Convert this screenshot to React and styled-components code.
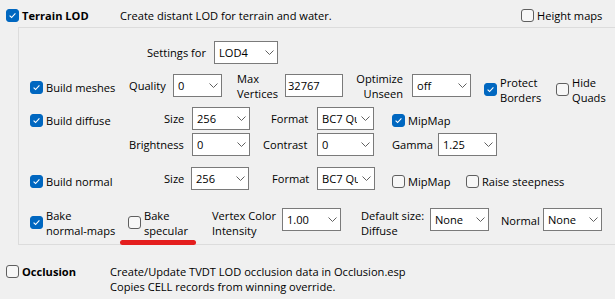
import React from 'react';
import styled, { createGlobalStyle } from 'styled-components';

const Global = createGlobalStyle`
  html, body { margin: 0; padding: 0; background: #f0f0f0; }
  body {
    width: 615px; height: 299px; overflow: hidden;
    font-family: "Open Sans", "Noto Sans", sans-serif;
    font-size: 11.1px; color: #000;
  }
`;

const Page = styled.div`
  width: 615px;
  height: 299px;
  display: flex;
  flex-direction: column;
`;

const Header = styled.div`
  display: flex;
  align-items: center;
  height: 24px;
  padding: 3px 0 0 6px;
`;

const Panel = styled.div`
  position: relative;
  margin-left: 18px;
  border-top: 1px solid #dcdcdc;
  border-left: 1px solid #dcdcdc;
  border-bottom: 1px solid #dcdcdc;
  padding: 13px 0 10px 11px;
  display: flex;
  flex-direction: column;
`;

const Row = styled.div`
  display: flex;
  align-items: center;
  height: ${p => p.$h || 23}px;
  margin-top: ${p => p.$mt || 0}px;
`;

const FooterRow = styled.div`
  display: flex;
  align-items: flex-start;
  margin-top: 19px;
  padding-left: 6px;
`;

const CheckItem = styled.label`
  display: flex;
  align-items: center;
  gap: 3px;
  flex-shrink: 0;
  width: ${p => (p.$w ? `${p.$w}px` : 'auto')};
  margin-left: ${p => p.$ml || 0}px;
  margin-top: ${p => p.$mt || 0}px;
  line-height: 15px;
  white-space: nowrap;
  font-weight: ${p => (p.$bold ? 700 : 400)};
`;

const Box = styled.span`
  box-sizing: border-box;
  width: 13px;
  height: 13px;
  flex-shrink: 0;
  border-radius: 3px;
  border: 1px solid ${p => (p.$on ? '#0067c0' : '#5f5f5f')};
  background: ${p => (p.$on ? '#0067c0' : '#f7f7f7')};
  display: flex;
  align-items: center;
  justify-content: center;
`;

const FieldLabel = styled.div`
  box-sizing: border-box;
  flex-shrink: 0;
  width: ${p => p.$w}px;
  margin-left: ${p => p.$ml || 0}px;
  margin-top: ${p => p.$mt || 0}px;
  padding-right: ${p => p.$pr || 0}px;
  text-align: ${p => p.$align || 'left'};
  line-height: 15px;
  white-space: nowrap;
`;

const ComboBox = styled.div`
  box-sizing: border-box;
  flex-shrink: 0;
  width: ${p => p.$w}px;
  height: 23px;
  margin-left: ${p => p.$ml || 0}px;
  background: #fff;
  border: 1px solid #7a7a7a;
  display: flex;
  align-items: center;
  padding-left: 4px;
`;

const ComboText = styled.span`
  flex: 1;
  overflow: hidden;
  white-space: nowrap;
  line-height: 15px;
`;

const ChevronSvg = styled.svg`
  flex-shrink: 0;
  margin: 0 3px 0 4px;
`;

const Edit = styled.div`
  box-sizing: border-box;
  flex-shrink: 0;
  width: ${p => p.$w}px;
  height: 23px;
  background: #fff;
  border: 1px solid #7a7a7a;
  display: flex;
  align-items: center;
  padding-left: 2px;
  line-height: 15px;
`;

const Description = styled.div`
  line-height: 15px;
  white-space: nowrap;
`;

const Underline = styled.div`
  position: absolute;
  left: 101px;
  top: 212px;
  width: 76px;
  height: 5px;
  border-radius: 3px;
  background: #e41e1e;
`;

const Check = ({ on, children, ...rest }) => (
  <CheckItem {...rest}>
    <Box $on={on}>
      {on && (
        <svg width="9" height="9" viewBox="0 0 9 9">
          <path d="M1.6 4.6 L3.6 6.5 L7.4 2.4" fill="none" stroke="#fff" strokeWidth="1.1" />
        </svg>
      )}
    </Box>
    <span>{children}</span>
  </CheckItem>
);

const Combo = ({ w, ml, children }) => (
  <ComboBox $w={w} $ml={ml}>
    <ComboText>{children}</ComboText>
    <ChevronSvg width="9" height="5" viewBox="0 0 9 5">
      <path d="M0.5 0.5 L4.5 4.5 L8.5 0.5" fill="none" stroke="#606060" strokeWidth="1" />
    </ChevronSvg>
  </ComboBox>
);

export default function App() {
  return (
    <Page>
      <Global />
      <Header>
        <Check on $w={114} $bold>Terrain LOD</Check>
        <FieldLabel $w={401}>Create distant LOD for terrain and water.</FieldLabel>
        <Check>Height maps</Check>
      </Header>

      <Panel>
        <Row>
          <FieldLabel $w={184} $align="right" $pr={8}>Settings for</FieldLabel>
          <Combo w={64}>LOD4</Combo>
        </Row>

        <Row $h={31} $mt={6}>
          <Check on $w={99} $mt={4}>Build meshes</Check>
          <FieldLabel $w={44}>Quality</FieldLabel>
          <Combo w={49}>0</Combo>
          <FieldLabel $w={48} $ml={15}>Max<br />Vertices</FieldLabel>
          <Edit $w={58}>32767</Edit>
          <FieldLabel $w={69} $align="right" $pr={9}>Optimize<br />Unseen</FieldLabel>
          <Combo w={59}>off</Combo>
          <Check on $w={72} $ml={13} $mt={8}>Protect<br />Borders</Check>
          <Check $mt={8}>Hide<br />Quads</Check>
        </Row>

        <Row $mt={6}>
          <Check on $w={134} $mt={4}>Build diffuse</Check>
          <FieldLabel $w={28}>Size</FieldLabel>
          <Combo w={58}>256</Combo>
          <FieldLabel $w={46} $ml={21}>Format</FieldLabel>
          <Combo w={57}>BC7 Quality</Combo>
          <Check on $ml={18} $mt={4}>MipMap</Check>
        </Row>

        <Row $mt={3}>
          <FieldLabel $w={63} $ml={99}>Brightness</FieldLabel>
          <Combo w={58}>0</Combo>
          <FieldLabel $w={54} $ml={13}>Contrast</FieldLabel>
          <Combo w={57}>0</Combo>
          <FieldLabel $w={46} $ml={18}>Gamma</FieldLabel>
          <Combo w={59}>1.25</Combo>
        </Row>

        <Row $mt={11}>
          <Check on $w={134} $mt={5}>Build normal</Check>
          <FieldLabel $w={27}>Size</FieldLabel>
          <Combo w={58}>256</Combo>
          <FieldLabel $w={45} $ml={23}>Format</FieldLabel>
          <Combo w={58}>BC7 Quality</Combo>
          <Check $w={74} $ml={17} $mt={5}>MipMap</Check>
          <Check $mt={5}>Raise steepness</Check>
        </Row>

        <Row $h={30} $mt={14}>
          <Check on $w={98} $mt={7}>Bake<br />normal-maps</Check>
          <Check $w={84} $mt={7}>Bake<br />specular</Check>
          <FieldLabel $w={70} $mt={7}>Vertex Color<br />Intensity</FieldLabel>
          <Combo w={59}>1.00</Combo>
          <FieldLabel $w={69} $ml={20} $mt={7}>Default size:<br />Diffuse</FieldLabel>
          <Combo w={59}>None</Combo>
          <FieldLabel $w={42} $ml={12} $mt={2}>Normal</FieldLabel>
          <Combo w={59}>None</Combo>
        </Row>

        <Underline />
      </Panel>

      <FooterRow>
        <Check $w={104} $bold>Occlusion</Check>
        <Description>
          Create/Update TVDT LOD occlusion data in Occlusion.esp<br />
          Copies CELL records from winning override.
        </Description>
      </FooterRow>
    </Page>
  );
}
